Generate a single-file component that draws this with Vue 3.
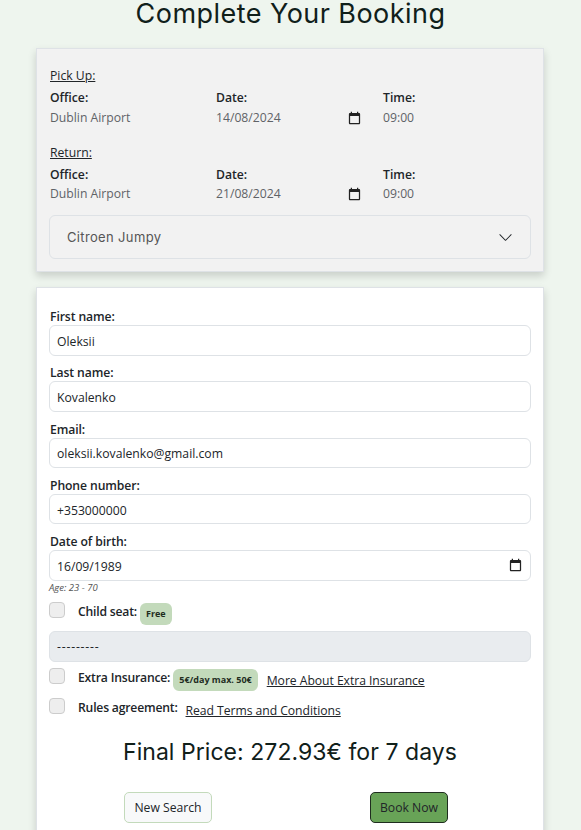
<template>
  <div class="page">
    <h1 class="title">Complete Your Booking</h1>

    <section class="card summary">
      <div v-for="leg in legs" :key="leg.name" class="leg">
        <p class="leg-name">{{ leg.name }}:</p>
        <div class="leg-grid">
          <div>
            <div class="head">Office:</div>
            <div class="val">{{ leg.office }}</div>
          </div>
          <div>
            <div class="head">Date:</div>
            <div class="val date-val">
              {{ leg.date }}
              <svg class="cal" viewBox="0 0 24 24"><path :d="calPath" /></svg>
            </div>
          </div>
          <div>
            <div class="head">Time:</div>
            <div class="val">{{ leg.time }}</div>
          </div>
        </div>
      </div>
      <div class="accordion">
        <span>Citroen Jumpy</span>
        <svg class="chevron" viewBox="0 0 16 16">
          <path fill-rule="evenodd" d="M1.646 4.646a.5.5 0 0 1 .708 0L8 10.293l5.646-5.647a.5.5 0 0 1 .708.708l-6 6a.5.5 0 0 1-.708 0l-6-6a.5.5 0 0 1 0-.708z" />
        </svg>
      </div>
    </section>

    <section class="card form">
      <div v-for="f in fields" :key="f.label" class="field">
        <label>{{ f.label }}</label>
        <input class="control" type="text" :value="f.value" readonly />
      </div>
      <div class="field">
        <label>Date of birth:</label>
        <div class="dob">
          <input class="control" type="text" value="16/09/1989" readonly />
          <svg class="cal dob-cal" viewBox="0 0 24 24"><path :d="calPath" /></svg>
        </div>
      </div>
      <small class="hint">Age: 23 - 70</small>

      <div class="check-row child">
        <input class="check" type="checkbox" />
        <span class="check-label">Child seat:</span>
        <span class="badge">Free</span>
      </div>
      <div class="select-off">---------</div>
      <div class="check-row extra">
        <input class="check" type="checkbox" />
        <span class="check-label">Extra Insurance:</span>
        <span class="badge">5€/day max. 50€</span>
        <a class="link" href="#">More About Extra Insurance</a>
      </div>
      <div class="check-row rules">
        <input class="check" type="checkbox" />
        <span class="check-label">Rules agreement:</span>
        <a class="link" href="#">Read Terms and Conditions</a>
      </div>

      <h2 class="price">Final Price: 272.93€ for 7 days</h2>

      <div class="actions">
        <button class="btn light" type="button">New Search</button>
        <button class="btn green" type="button">Book Now</button>
      </div>
    </section>
  </div>
</template>

<script setup>
const calPath = 'M19 3h-1V1h-2v2H8V1H6v2H5c-1.11 0-1.99.9-1.99 2L3 19c0 1.1.89 2 2 2h14c1.1 0 2-.9 2-2V5c0-1.1-.9-2-2-2zm0 16H5V8h14v11z'

const legs = [
  { name: 'Pick Up', office: 'Dublin Airport', date: '14/08/2024', time: '09:00' },
  { name: 'Return', office: 'Dublin Airport', date: '21/08/2024', time: '09:00' }
]

const fields = [
  { label: 'First name:', value: 'Oleksii' },
  { label: 'Last name:', value: 'Kovalenko' },
  { label: 'Email:', value: 'oleksii.kovalenko@gmail.com' },
  { label: 'Phone number:', value: '+353000000' }
]
</script>

<style>
html,
body {
  margin: 0;
  background: #eef5ee;
}
</style>

<style scoped>
.page {
  height: 830px;
  overflow: hidden;
  padding: 0 36px;
  box-sizing: border-box;
  font-family: "Open Sans", "Noto Sans", sans-serif;
  font-size: 12.2px;
  color: #212529;
}

.title {
  margin: 0 0 20px;
  height: 28px;
  line-height: 28px;
  text-align: center;
  font-family: Inter, sans-serif;
  font-size: 27px;
  font-weight: 400;
  letter-spacing: 0.45px;
  color: #10201a;
}

.card {
  box-sizing: border-box;
  width: 508px;
  border: 1px solid #dee2e6;
  padding: 0 12px;
  box-shadow: 0 4px 8px rgba(0, 0, 0, 0.16);
}

.summary {
  height: 224px;
  padding-top: 18px;
  background: #f2f2f2;
}

.leg {
  height: 77px;
  padding-left: 1px;
}

.leg-name {
  margin: 0;
  height: 20px;
  line-height: 18px;
  text-decoration: underline;
}

.leg-grid {
  display: grid;
  grid-template-columns: 166px 167px 1fr;
}

.head {
  height: 21px;
  line-height: 21px;
  font-weight: 550;
}

.val {
  height: 20px;
  line-height: 20px;
  color: #5f6367;
}

.leg + .leg .val {
  margin-top: -1px;
}

.date-val {
  display: flex;
  justify-content: space-between;
  align-items: center;
  padding-right: 21px;
}

.cal {
  width: 15px;
  height: 15px;
  flex: none;
  fill: #222;
}

.accordion {
  display: flex;
  justify-content: space-between;
  align-items: center;
  box-sizing: border-box;
  height: 44px;
  margin-top: -6px;
  padding: 0 17px;
  border: 1px solid #dee2e6;
  border-radius: 6px;
  font-family: Inter, sans-serif;
  font-size: 13px;
  letter-spacing: 0.35px;
  color: #555;
}

.chevron {
  width: 15px;
  height: 15px;
  fill: #212529;
}

.form {
  margin-top: 15px;
  height: 700px;
  padding-top: 19px;
  background: #fff;
}

.field label {
  display: block;
  height: 18px;
  padding-left: 1px;
  line-height: 20px;
  font-weight: 550;
  letter-spacing: -0.1px;
}

.field {
  margin-bottom: 7.75px;
}

.control {
  display: block;
  box-sizing: border-box;
  width: 100%;
  height: 30.5px;
  padding: 2px 7px 0;
  border: 1px solid #dee2e6;
  border-radius: 6px;
  outline: none;
  background: #fff;
  font: inherit;
  color: #212529;
}

.dob {
  position: relative;
}

.dob-cal {
  position: absolute;
  top: 8px;
  right: 8px;
}

.hint {
  display: block;
  margin-top: -7px;
  height: 14px;
  line-height: 14px;
  font-size: 9.5px;
  font-style: italic;
  color: #555;
}

.check-row {
  display: flex;
  align-items: flex-start;
}

.check {
  appearance: none;
  flex: none;
  box-sizing: border-box;
  width: 16px;
  height: 16px;
  margin: 0 13px 0 0;
  border: 1px solid #ccc;
  border-radius: 4px;
  background: #eee;
}

.check-label {
  margin-top: 1px;
  line-height: 18px;
  font-weight: 550;
  letter-spacing: -0.2px;
}

.badge {
  margin: 1px 0 0 3px;
  padding: 0 6px;
  height: 22px;
  line-height: 22px;
  border-radius: 6px;
  background: #c3dabb;
  font-size: 9px;
  font-weight: 700;
  color: #1f2d1f;
}

.link {
  color: #212529;
  text-decoration: underline;
  line-height: 18px;
}

.child {
  height: 29px;
  margin-top: 7px;
}

.select-off {
  box-sizing: border-box;
  height: 31px;
  line-height: 29px;
  padding: 0 7px;
  border: 1px solid #dee2e6;
  border-radius: 6px;
  background: #e9ecef;
  letter-spacing: 0.8px;
}

.extra {
  height: 30px;
  margin-top: 6px;
}

.extra .link {
  margin: 4px 0 0 9px;
  letter-spacing: -0.05px;
}

.rules {
  height: 18px;
}

.rules .link {
  margin: 4px 0 0 8px;
  letter-spacing: -0.05px;
}

.price {
  margin: 21px 0 0;
  height: 30px;
  line-height: 30px;
  text-align: center;
  font-family: Inter, sans-serif;
  font-size: 23px;
  font-weight: 400;
  letter-spacing: 0.05px;
  color: #10201a;
}

.actions {
  display: grid;
  grid-template-columns: 1fr 1fr;
  justify-items: center;
  margin-top: 25px;
}

.btn {
  box-sizing: border-box;
  height: 31px;
  padding: 0 9px;
  border-radius: 5px;
  font: inherit;
  color: #212529;
}

.light {
  margin-right: 3px;
  border: 1px solid #c3dabb;
  background: #f8f9fa;
}

.green {
  margin-right: 3px;
  border: 1px solid #1f2d1f;
  background: #68a357;
}
</style>
